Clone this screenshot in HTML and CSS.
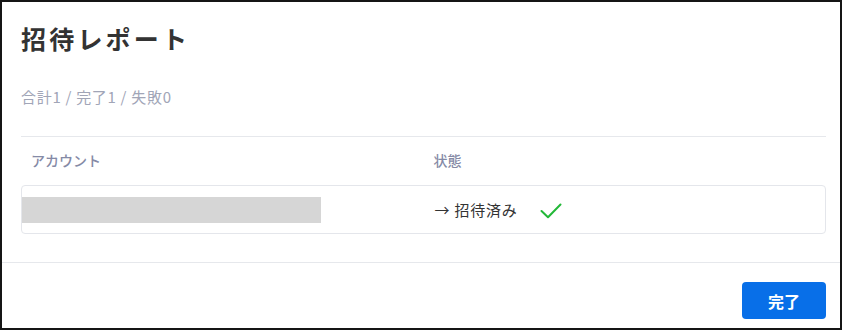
FILE: index.html
```html
<!DOCTYPE html>
<html lang="ja">
<head>
<meta charset="utf-8">
<link rel="stylesheet" href="styles.css">
</head>
<body>
<div class="dialog">
  <div class="body">
    <h1 class="title">招待レポート</h1>
    <p class="summary">合計1 / 完了1 / 失敗0</p>
    <div class="table">
      <div class="thead">
        <div class="th">アカウント</div>
        <div class="th">状態</div>
      </div>
      <div class="row">
        <div class="cell cell-account"><div class="redacted"></div></div>
        <div class="cell cell-status">
          <span class="status-text">→ 招待済み</span>
          <svg class="check" width="22" height="16" viewBox="0 0 22 16"><path d="M1.5 8 L8 14.2 L20.5 1.5" fill="none" stroke="#23b838" stroke-width="2" stroke-linecap="round" stroke-linejoin="round"/></svg>
        </div>
      </div>
    </div>
  </div>
  <div class="footer">
    <button class="btn-primary">完了</button>
  </div>
</div>
</body>
</html>
```

FILE: styles.css
```css
* { box-sizing: border-box; }
html, body { margin: 0; padding: 0; background: #fff; }
body {
  font-family: "Noto Sans CJK JP", "Noto Sans", sans-serif;
  color: #333;
}
.dialog {
  width: 842px;
  height: 330px;
  border: 2px solid #151515;
  display: flex;
  flex-direction: column;
}
.body {
  padding: 20px 14px 0 19px;
}
.title {
  margin: 0;
  font-size: 25px;
  line-height: 32px;
  letter-spacing: 3.2px;
  font-weight: 700;
  color: #333;
}
.summary {
  margin: 33px 0 0;
  font-size: 15px;
  line-height: 20px;
  letter-spacing: 0.7px;
  color: #a1a5b7;
}
.table {
  margin-top: 29px;
  border-top: 1px solid #e6e8ec;
}
.thead {
  display: grid;
  grid-template-columns: 1fr 1fr;
  padding: 13px 0 15px;
}
.th {
  padding-left: 10px;
  font-size: 14px;
  line-height: 20px;
  font-weight: 500;
  color: #858aa6;
}
.row {
  display: grid;
  grid-template-columns: 1fr 1fr;
  height: 49px;
  border: 1px solid #e4e6eb;
  border-radius: 4px;
  align-items: center;
}
.cell-account { display: flex; align-items: center; }
.redacted {
  width: 299px;
  height: 26px;
  background: #d6d6d6;
}
.cell-status {
  display: flex;
  align-items: center;
  padding-left: 11px;
  font-size: 15px;
  letter-spacing: 0.8px;
  color: #333;
}
.check { margin-left: 22px; margin-top: 2px; }
.footer {
  margin-top: 28px;
  border-top: 1px solid #e6e8ec;
  display: flex;
  justify-content: flex-end;
  padding: 19px 14px 0 0;
}
.btn-primary {
  width: 84px;
  height: 37px;
  border: none;
  border-radius: 4px;
  background: #086fe8;
  color: #fff;
  font-family: "Noto Sans CJK JP", sans-serif;
  font-size: 16px;
  font-weight: 700;
}
```
